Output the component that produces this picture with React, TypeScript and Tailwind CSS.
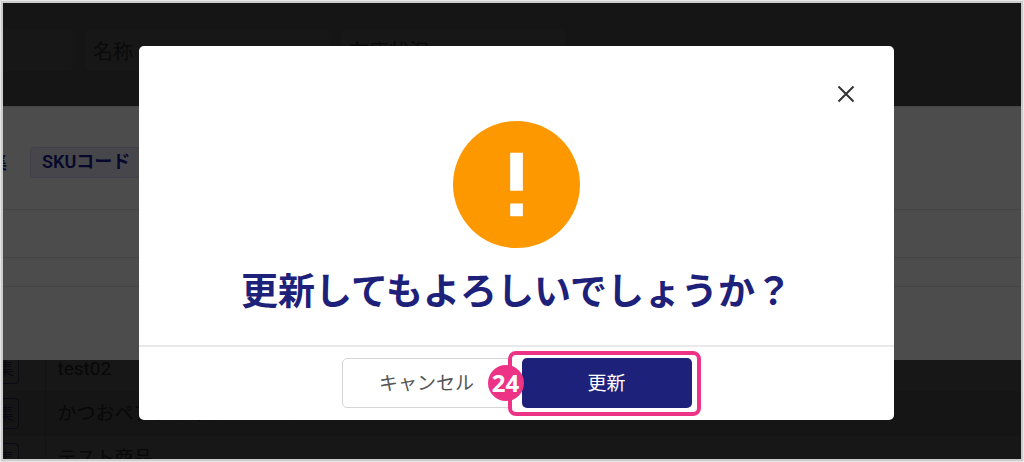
import React from "react";

const rows = ["test02", "かつおペプチドサプリメント", "テスト商品"];

function Backdrop() {
  return (
    <div className="flex h-full flex-col overflow-hidden" inert>
      <form className="flex h-[103px] shrink-0 items-start gap-3 pt-[26px]">
        <input aria-label="コード" className="-ml-2 h-[42px] w-[78px] rounded bg-[#171717]" />
        <input
          aria-label="名称"
          defaultValue="名称"
          className="h-[42px] w-[244px] rounded bg-[#171717] px-2 text-[20px] text-[#0a0a0a]"
        />
        <input
          aria-label="在庫状況"
          defaultValue="在庫状況"
          className="h-[42px] w-56 rounded bg-[#171717] px-2 text-[20px] text-[#0a0a0a]"
        />
      </form>
      <section className="relative flex h-[254px] shrink-0 flex-col border-t border-[#444444] bg-[#4c4c4c]">
        <div className="flex h-[103px] items-center gap-6 border-b border-[#444444] pt-2">
          <h1 className="-ml-8 text-[18px] font-bold text-[#08082c]">編集</h1>
          <span className="-ml-px h-[31px] rounded-sm border border-[#40404a] bg-[#47474b] px-[11px] text-[18px] leading-7 font-semibold text-[#08082c]">
            SKUコード
          </span>
        </div>
        <div className="h-12 border-b border-[#444444]" />
        <div className="h-[29px] border-b border-[#444444]" />
      </section>
      <table className="-mt-[14px] w-full border-collapse text-[19px] text-[#080808]">
        <tbody>
          {rows.map((name) => (
            <tr key={name} className="h-[45px] odd:bg-[#171717] even:bg-[#151515]">
              <td className="w-[42px] border-r border-[#131313] p-0">
                <button className="-ml-8 block h-[31px] w-12 rounded-sm border border-[#0a0a12] pr-1 text-right text-[18px] leading-7 text-[#0a0a12]">
                  編集
                </button>
              </td>
              <td className="px-3 py-0 leading-7">{name}</td>
            </tr>
          ))}
        </tbody>
      </table>
    </div>
  );
}

function ConfirmDialog() {
  return (
    <div
      role="dialog"
      aria-modal="true"
      aria-labelledby="confirm-title"
      className="flex w-full max-w-[755px] flex-col rounded-[5px] bg-white"
    >
      <div className="flex justify-end pt-9 pr-9">
        <button aria-label="閉じる" className="flex size-6 items-center justify-center">
          <svg viewBox="0 0 24 24" className="size-6" fill="none" stroke="#333333" strokeWidth="2">
            <path d="M4.5 4.5 19.5 19.5M19.5 4.5 4.5 19.5" />
          </svg>
        </button>
      </div>
      <div className="flex flex-col items-center pt-[15px]">
        <svg viewBox="0 0 20 20" className="size-[127px]" aria-hidden="true">
          <circle cx="10" cy="10" r="10" fill="#fd9801" />
          <path d="M9 5h2v6H9zM9 13h2v2H9z" fill="#ffffff" />
        </svg>
        <h2
          id="confirm-title"
          className="pt-[18px] text-center text-[37px] leading-[54px] font-bold text-[#1e2179]"
        >
          更新してもよろしいでしょうか？
        </h2>
      </div>
      <div className="mt-[25px] flex justify-center gap-[10px] border-t-2 border-[#e9e9e9] pt-[11px] pb-3">
        <button className="h-[50px] w-[170px] rounded-[5px] border border-[#d6d6d6] bg-white pt-0.5 text-[19px] text-[#555555]">
          キャンセル
        </button>
        <div className="relative">
          <button className="h-[50px] w-[170px] rounded-[5px] bg-[#1e2179] pt-0.5 text-[19px] text-white">
            更新
          </button>
          <div className="pointer-events-none absolute -top-[7px] -right-[9px] -bottom-2 -left-[14px] rounded-lg border-4 border-[#ed3385]" />
          <span className="absolute top-[7px] -left-[34px] flex size-9 items-center justify-center rounded-full bg-[#ed3385] font-['Noto_Sans',sans-serif] text-[24px] leading-9 font-bold text-white">
            24
          </span>
        </div>
      </div>
    </div>
  );
}

export default function App() {
  return (
    <div className="h-screen border border-[#e6e6e6] font-['Roboto','Noto_Sans_CJK_JP',sans-serif]">
      <div className="relative h-full border-2 border-[#cccccc] bg-[#151515]">
        <Backdrop />
        <div className="absolute inset-0 flex items-start justify-center pt-[43px] pl-[9px]">
          <ConfirmDialog />
        </div>
      </div>
    </div>
  );
}
